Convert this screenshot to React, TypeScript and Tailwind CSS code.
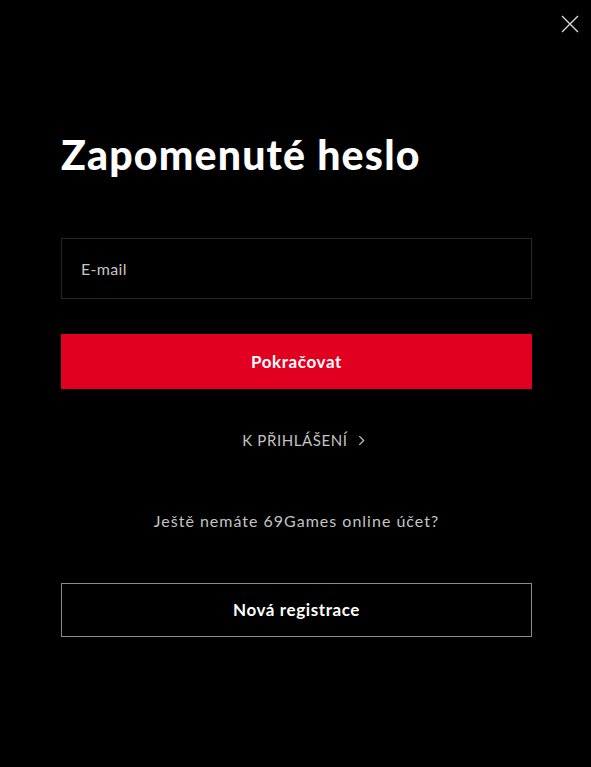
import React from 'react';

const ForgotPassword = () => {
  return (
    <div className="relative min-h-[767px] w-full bg-black font-['Lato','Liberation_Sans',sans-serif]">
      {/* Close */}
      <button className="absolute right-[12px] top-[15px] h-[18px] w-[18px] text-[#d8d8d8]" aria-label="Zavřít">
        <svg viewBox="0 0 18 18" className="h-full w-full" fill="none" stroke="currentColor" strokeWidth="1.4">
          <path d="M1 1 L17 17 M17 1 L1 17" />
        </svg>
      </button>

      <div className="flex flex-col pl-[61px] pr-[59px] pt-[131px]">
        <h1 className="text-[41px] font-black leading-[48px] tracking-[1.2px] text-white">Zapomenuté heslo</h1>

        <div className="mt-[59px] flex h-[61px] items-center border border-[#262626] px-[19px]">
          <span className="text-[16px] tracking-[0.3px] text-[#c4c4c4]">E-mail</span>
        </div>

        <button className="mt-[35px] h-[55px] w-full bg-[#e10020] text-[17px] font-bold tracking-[0.6px] text-white">
          Pokračovat
        </button>

        <div className="mt-[40px] flex items-center justify-center gap-[10px] pl-[14px] text-[15px] tracking-[0.6px] text-[#c4c4c4]">
          <span>K PŘIHLÁŠENÍ</span>
          <svg viewBox="0 0 8 12" className="h-[11px] w-[7px]" fill="none" stroke="currentColor" strokeWidth="1.4">
            <path d="M1.5 1 L6.5 6 L1.5 11" />
          </svg>
        </div>

        <p className="mt-[57px] text-center text-[16px] tracking-[1px] text-[#c4c4c4]">
          Ještě nemáte 69Games online účet?
        </p>

        <button className="mt-[50px] h-[54px] w-full border border-[#8a8a8a] text-[17px] font-bold tracking-[0.6px] text-white">
          Nová registrace
        </button>
      </div>
    </div>
  );
};

export default function App() {
  return <ForgotPassword />;
}
